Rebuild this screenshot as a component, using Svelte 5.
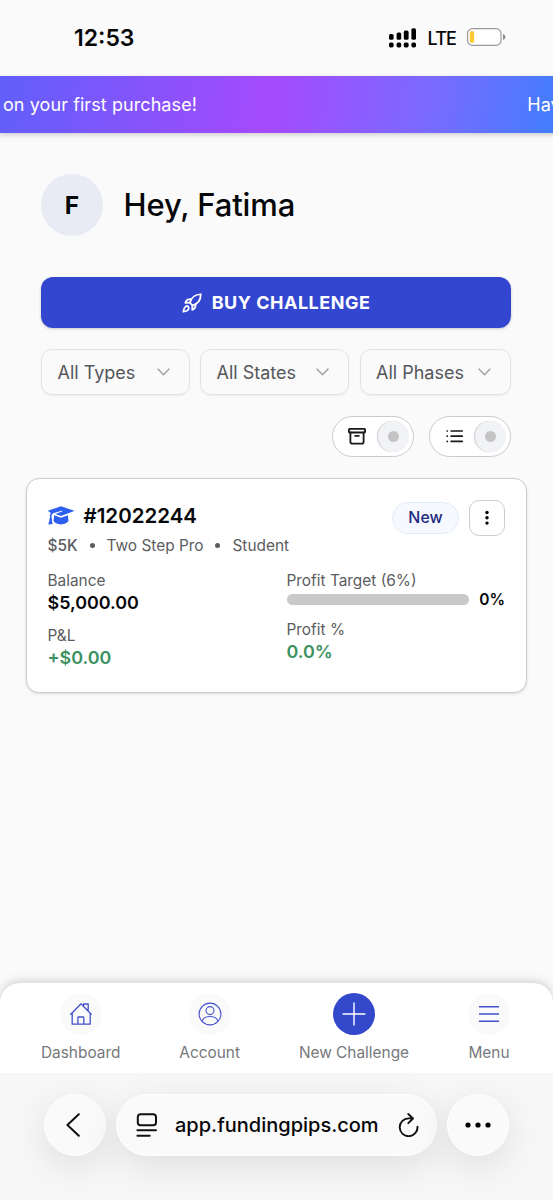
<script>
  const filters = [
    { label: 'All Types', width: 148.5 },
    { label: 'All States', width: 149 },
    { label: 'All Phases', width: 151.5 }
  ];

  let account = {
    id: '#12022244',
    tags: ['$5K', 'Two Step Pro', 'Student'],
    status: 'New',
    balance: '$5,000.00',
    pnl: '+$0.00',
    target: 6,
    progress: 0,
    profit: '0.0%'
  };
</script>

<div class="screen">
  <header class="status-bar">
    <span class="time">12:53</span>
    <div class="status-icons">
      <svg class="signal" width="28" height="20" viewBox="0 0 28 20">
        <rect x="0" y="6" width="4.6" height="5.8" rx="1.6" />
        <rect x="7.6" y="4.6" width="4.6" height="7.2" rx="1.6" />
        <rect x="14.8" y="2.6" width="4.8" height="9.2" rx="1.6" />
        <rect x="22.4" y="0.2" width="4.6" height="11.6" rx="1.6" />
        <rect x="0" y="14.6" width="4.6" height="4.8" rx="1.6" />
        <rect x="7.6" y="14.6" width="4.6" height="4.8" rx="1.6" />
        <rect x="14.8" y="14.6" width="4.8" height="4.8" rx="1.6" />
        <rect x="22.4" y="14.6" width="4.6" height="4.8" rx="1.6" />
      </svg>
      <span class="lte">LTE</span>
      <svg class="battery" width="40" height="18" viewBox="0 0 40 18">
        <rect x="0.6" y="0.6" width="33.4" height="16.8" rx="5" fill="#fff" stroke="#999" stroke-width="1.2" />
        <rect x="2.8" y="3" width="4.4" height="12" rx="2" fill="#fccb32" />
        <path d="M36 6c3.2 .7 3.2 5.3 0 6z" fill="#8c8c8c" />
      </svg>
    </div>
  </header>

  <div class="banner">
    <span>on your first purchase!</span>
    <span>Have</span>
  </div>

  <main>
    <div class="greeting">
      <div class="avatar">F</div>
      <h1>Hey, Fatima</h1>
    </div>

    <button class="buy">
      <svg width="20" height="20" viewBox="0 0 24 24" fill="none" stroke="currentColor" stroke-width="2.1" stroke-linejoin="round" stroke-linecap="round">
        <path d="M9.5 11.5C11 6 15 1.8 22.5 1.5c0 7.5-4.5 12-10 13.5z" />
        <path d="M9.5 11.5l-5.5.3c.8-3 2.7-4.6 7-4.3M12.5 15l-.3 5.300c3-1 4.300-2.800 4-6.800" />
        <path d="M4.200 16.300C2 18 1.500 22.500 1.500 22.500s4.500-.5 6-2.500c1-1.300.8-2.500.1-3.400s-2.200-1.200-3.400-.3z" />
      </svg>
      <span>BUY CHALLENGE</span>
    </button>

    <div class="filters">
      {#each filters as filter}
        <button class="filter" style="width: {filter.width}px">
          <span>{filter.label}</span>
          <svg width="13" height="8" viewBox="0 0 13 8" fill="none" stroke="#a0a2a6" stroke-width="1.5" stroke-linecap="round" stroke-linejoin="round">
            <path d="M1 1l5.5 5.7L12 1" />
          </svg>
        </button>
      {/each}
    </div>

    <div class="toggles">
      <button class="toggle" aria-label="Archived">
        <svg width="18" height="17" viewBox="0 0 18 17" fill="none" stroke="#17171c" stroke-width="1.8" stroke-linejoin="round" stroke-linecap="round">
          <rect x="0.9" y="0.9" width="16.2" height="3.6" rx="0.8" />
          <path d="M2.4 4.5v9.2q0 1.9 1.9 1.9h9.4q1.9 0 1.9-1.9V4.5M7.2 7.9h3.6" />
        </svg>
        <span class="knob"></span>
      </button>
      <button class="toggle" aria-label="List view">
        <svg width="18" height="17" viewBox="0 0 18 17" fill="none" stroke="#17171c" stroke-width="1.7" stroke-linecap="round">
          <path d="M5.2 3h11M5.2 8.2h11M5.2 13.4h11M1.2 3h.1M1.2 8.2h.1M1.2 13.4h.1" />
        </svg>
        <span class="knob"></span>
      </button>
    </div>

    <section class="card">
      <div class="card-header">
        <svg class="cap" width="26" height="19" viewBox="0 0 26 19" fill="#2f5ff0">
          <path d="M13 .2L25.6 4.6q.6.3 0 .7L13 9.9 7.4 7.9 14 5.6q.5-.3.3-.7t-.8-.2L5.2 7.3q-1.5.8-1.7 2.5v2.3q1 .7.3 1.7l.8 4.3-3.8.4q-.6 0-.4-.7l1.2-4q-.6-1 .3-1.7V9.8q0-1.5 1-2.8L.4 5.3q-.6-.3 0-.7z" />
          <path d="M6.2 9.2L13 11.7l6.9-2.5.6 5.9q-2.600 3.300-7.500 3.300-5 0-7.500-3.300z" />
        </svg>
        <h2>{account.id}</h2>
        <span class="badge">{account.status}</span>
        <button class="more" aria-label="More">
          <svg width="4" height="16" viewBox="0 0 4 16">
            <circle cx="2" cy="2.5" r="1.7" />
            <circle cx="2" cy="7.8" r="1.7" />
            <circle cx="2" cy="13.1" r="1.7" />
          </svg>
        </button>
      </div>

      <div class="tags">
        {#each account.tags as tag, i}
          {#if i > 0}<span class="dot"></span>{/if}
          <span class:amount={i === 0}>{tag}</span>
        {/each}
      </div>

      <div class="stats">
        <div class="stat-col">
          <span class="label">Balance</span>
          <span class="value">{account.balance}</span>
          <span class="label pnl">P&amp;L</span>
          <span class="value gain">{account.pnl}</span>
        </div>
        <div class="stat-col">
          <span class="label">Profit Target ({account.target}%)</span>
          <div class="progress">
            <div class="track"><div class="fill" style="width: {account.progress}%"></div></div>
            <span class="percent">{account.progress}%</span>
          </div>
          <span class="label">Profit %</span>
          <span class="value gain">{account.profit}</span>
        </div>
      </div>
    </section>
  </main>

  <nav class="tab-bar">
    <a class="tab" href="#dashboard">
      <span class="tab-icon">
        <svg width="22" height="24" viewBox="0 0 22 24" fill="none" stroke="#4450cc" stroke-width="1.3" stroke-linejoin="round" stroke-linecap="round">
          <path d="M.8 12.2L11 1.8l10.2 10.4M2.2 10.8v11.4h18V10.8M7.9 22.2v-6.5q0-.7.7-.7h4.5q.7 0 .7.7v6.5M13.6 4.2V2h4.6v7" />
        </svg>
      </span>
      <span>Dashboard</span>
    </a>
    <a class="tab" href="#account">
      <span class="tab-icon">
        <svg width="24" height="24" viewBox="0 0 24 24" fill="none" stroke="#4450cc" stroke-width="1.1">
          <circle cx="12" cy="12" r="10.9" />
          <circle cx="12" cy="8.6" r="4" />
          <path d="M4 19.3c1.8-6.3 14.2-6.3 16 0" />
        </svg>
      </span>
      <span>Account</span>
    </a>
    <a class="tab" href="#new">
      <span class="tab-icon primary">
        <svg width="24" height="24" viewBox="0 0 24 24" stroke="#fff" stroke-width="1.4" stroke-linecap="round">
          <path d="M12 1v22M1 12h22" />
        </svg>
      </span>
      <span>New Challenge</span>
    </a>
    <a class="tab" href="#menu">
      <span class="tab-icon">
        <svg width="22" height="18" viewBox="0 0 22 18" stroke="#4450cc" stroke-width="1.5">
          <path d="M1 1.7h20M1 9h20M1 16.3h20" />
        </svg>
      </span>
      <span>Menu</span>
    </a>
  </nav>

  <footer class="browser-bar">
    <button class="round back" aria-label="Back">
      <svg width="14" height="24" viewBox="0 0 14 24" fill="none" stroke="#111" stroke-width="2" stroke-linecap="round" stroke-linejoin="round">
        <path d="M12.8 1.2L1.4 12l11.4 10.8" />
      </svg>
    </button>
    <div class="address">
      <svg width="22" height="24" viewBox="0 0 22 24" fill="none" stroke="#111" stroke-width="2" stroke-linecap="round">
        <rect x="1.8" y="1.3" width="18.2" height="10.9" rx="2.8" />
        <path d="M1.4 17.3h18.6M1.4 22.7h12.3" />
      </svg>
      <span class="url">app.fundingpips.com</span>
      <svg width="21" height="24" viewBox="0 0 21 24" fill="none" stroke="#111" stroke-width="1.9" stroke-linecap="round" stroke-linejoin="round">
        <path d="M14.6 5.4H10.5a8.9 8.9 0 1 0 9 8.3M10.3 1l4.7 4.5-4.7 4.7" />
      </svg>
    </div>
    <button class="round" aria-label="Page options">
      <svg width="26" height="6" viewBox="0 0 26 6">
        <circle cx="3" cy="3" r="2.6" />
        <circle cx="13" cy="3" r="2.6" />
        <circle cx="23" cy="3" r="2.6" />
      </svg>
    </button>
  </footer>
</div>

<style>
  :global(body) {
    margin: 0;
    background: #fafafa;
  }

  .screen {
    width: 553px;
    height: 1200px;
    display: flex;
    flex-direction: column;
    overflow: hidden;
    background: #fafafa;
    color: #060709;
    font-family: Inter, 'Liberation Sans', sans-serif;
  }

  .screen *,
  .screen {
    box-sizing: border-box;
  }

  svg {
    display: block;
    flex: none;
  }

  button {
    margin: 0;
    padding: 0;
    font: inherit;
    color: inherit;
    background: none;
    border: none;
  }

  .status-bar {
    height: 76px;
    flex: none;
    display: flex;
    align-items: center;
    justify-content: space-between;
    padding: 0 46px 0 74px;
  }

  .time {
    font-size: 23px;
    font-weight: 600;
    line-height: 28px;
  }

  .status-icons {
    display: flex;
    align-items: center;
    margin-top: -2px;
  }

  .signal {
    margin-top: 1px;
  }

  .lte {
    margin: 3px 11px 0 11px;
    font-size: 18px;
    line-height: 22px;
    font-weight: 500;
    letter-spacing: -0.9px;
  }

  .banner {
    height: 57px;
    flex: none;
    display: flex;
    align-items: center;
    justify-content: space-between;
    padding-left: 3px;
    margin-right: -18px;
    color: #fff;
    font-size: 18px;
    letter-spacing: 0.08px;
    background: linear-gradient(100deg, #615ffb 0, #a54afd 270px, #7a6bff 430px, #437dfd 553px);
    box-shadow: 0 2px 5px rgba(0, 0, 0, 0.18);
    white-space: nowrap;
  }

  main {
    flex: 1;
    padding: 41px 26px 0;
  }

  .greeting {
    display: flex;
    align-items: center;
    gap: 20.5px;
    padding-left: 15px;
  }

  .avatar {
    width: 62px;
    height: 62px;
    display: flex;
    align-items: center;
    justify-content: center;
    border-radius: 50%;
    background: #e8ebf4;
    font-size: 24.5px;
    font-weight: 700;
  }

  h1 {
    margin: 0;
    font-size: 31px;
    line-height: 40px;
    font-weight: 500;
    letter-spacing: -0.15px;
  }

  .buy {
    width: 470px;
    height: 51px;
    margin: 41px 15px 0;
    display: flex;
    align-items: center;
    justify-content: center;
    gap: 10px;
    border-radius: 12px;
    background: #3346cf;
    color: #fff;
    font-size: 18px;
    font-weight: 700;
    letter-spacing: 0.5px;
    box-shadow: 0 1px 3px rgba(0, 0, 0, 0.2);
  }

  .filters {
    display: flex;
    gap: 10.5px;
    margin: 21px 15px 0;
  }

  .filter {
    height: 46px;
    display: flex;
    align-items: center;
    justify-content: space-between;
    padding: 0 19px 0 15.5px;
    border: 1.5px solid #e3e3e5;
    border-radius: 11px;
    color: #55565a;
    font-size: 18px;
    box-shadow: 0 1px 2px rgba(0, 0, 0, 0.06);
  }

  .toggles {
    display: flex;
    justify-content: flex-end;
    gap: 15.5px;
    margin: 21px 16px 0 0;
  }

  .toggle {
    width: 82px;
    height: 41px;
    display: flex;
    align-items: center;
    justify-content: space-between;
    padding: 0 4px 0 15.5px;
    border: 1.5px solid #cbcbcd;
    border-radius: 21px;
    background: #fff;
  }

  .knob {
    width: 31px;
    height: 31px;
    display: flex;
    align-items: center;
    justify-content: center;
    border-radius: 50%;
    background: #f2f3f7;
    box-shadow: -1px 0 1px rgba(0, 0, 0, 0.22);
  }

  .knob::before {
    content: '';
    width: 11px;
    height: 11px;
    border-radius: 50%;
    background: #c4c4c5;
  }

  .card {
    width: 500.5px;
    height: 215px;
    margin-top: 21px;
    padding: 20.5px 20.5px 0;
    border: 1.5px solid #cdcdcf;
    border-radius: 13px;
    background: #fff;
    box-shadow: 0 1px 3px rgba(0, 0, 0, 0.12);
  }

  .card-header {
    display: flex;
    align-items: center;
    height: 36px;
  }

  h2 {
    flex: 1;
    margin: -5px 0 0 10px;
    font-size: 20.5px;
    font-weight: 600;
  }

  .cap {
    margin-top: -5px;
  }

  .badge {
    width: 67px;
    height: 32px;
    display: flex;
    align-items: center;
    justify-content: center;
    border: 1.5px solid #e4ebf8;
    border-radius: 16px;
    background: #f6f9ff;
    color: #1e2a80;
    font-size: 15.9px;
    font-weight: 500;
  }

  .more {
    width: 36px;
    height: 36px;
    display: flex;
    align-items: center;
    justify-content: center;
    margin-left: 10px;
    border: 1.5px solid #cdcdcf;
    border-radius: 10px;
  }

  .tags {
    display: flex;
    align-items: center;
    gap: 12px;
    height: 20px;
    color: #5b5c60;
    font-size: 15.4px;
  }

  .amount {
    font-weight: 500;
  }

  .dot {
    width: 5px;
    height: 5px;
    border-radius: 50%;
    background: #5b5c60;
  }

  .stats {
    display: grid;
    grid-template-columns: 239px 1fr;
    margin-top: 14.5px;
  }

  .stat-col {
    display: flex;
    flex-direction: column;
  }

  .label {
    color: #5b5c60;
    font-size: 15.4px;
    line-height: 21px;
  }

  .value {
    font-size: 17.9px;
    font-weight: 600;
    line-height: 24px;
  }

  .pnl {
    margin-top: 9.5px;
  }

  .gain {
    color: #3c9163;
  }

  .progress {
    display: flex;
    align-items: center;
    justify-content: space-between;
    height: 17px;
    margin-bottom: 10.5px;
  }

  .track {
    width: 182px;
    height: 11px;
    border-radius: 6px;
    background: #c9c9c9;
    overflow: hidden;
  }

  .fill {
    height: 100%;
    background: #3346cf;
  }

  .percent {
    font-size: 15.5px;
    font-weight: 600;
  }

  .tab-bar {
    height: 90px;
    flex: none;
    display: flex;
    justify-content: space-between;
    padding: 10px 43px 0 41px;
    border-radius: 20px 20px 0 0;
    background: #fff;
    box-shadow: 0 -2px 10px rgba(0, 0, 0, 0.17);
  }

  .tab {
    display: flex;
    flex-direction: column;
    align-items: center;
    gap: 7.5px;
    color: #77787b;
    font-size: 15.4px;
    line-height: 20px;
    text-decoration: none;
  }

  .tab-icon {
    width: 42px;
    height: 42px;
    display: flex;
    align-items: center;
    justify-content: center;
    border-radius: 50%;
    background: #fafafa;
  }

  .primary {
    background: #3448cc;
  }

  .browser-bar {
    position: relative;
    height: 127px;
    flex: none;
    display: flex;
    align-items: flex-start;
    gap: 10px;
    padding: 21px 44px 0;
    background: #f7f7f7;
    overflow: hidden;
  }

  .round,
  .address {
    height: 62px;
    display: flex;
    align-items: center;
    border-radius: 31px;
    border: 1px solid #fff;
    background: #fafafa;
    box-shadow: 0 10px 36px rgba(0, 0, 0, 0.1);
  }

  .round {
    width: 62px;
    justify-content: center;
  }

  .back {
    padding-right: 5px;
  }

  .address {
    flex: 1;
    padding: 0 17px 0 19px;
  }

  .url {
    flex: 1;
    margin-left: 17px;
    font-size: 20px;
    font-weight: 500;
  }
</style>
